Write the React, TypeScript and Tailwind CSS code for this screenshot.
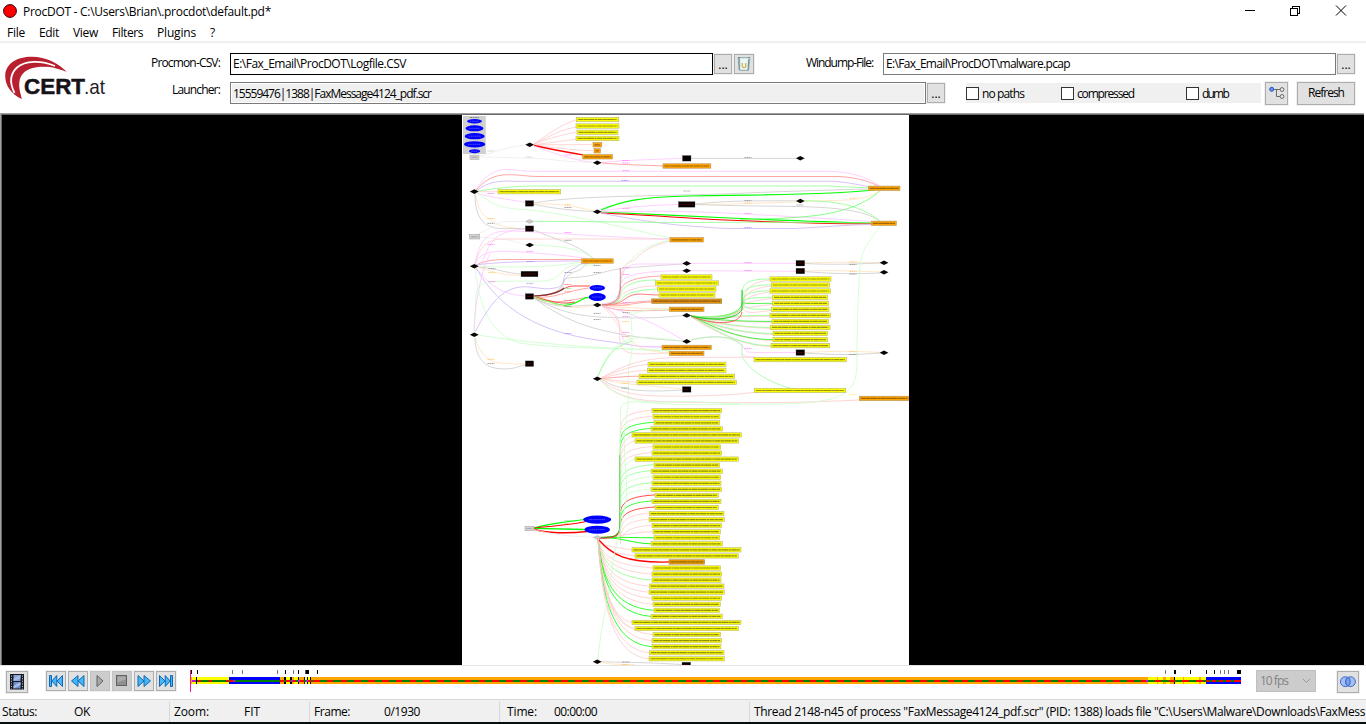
import { useLayoutEffect, useRef, useState } from "react";
import type { ReactNode } from "react";

/** Text whose letter spacing is adjusted so that it fills a given width. */
function Fit({ w, children, className = "" }: { w: number; children: string; className?: string }) {
  const ref = useRef<HTMLSpanElement>(null);
  const [ls, setLs] = useState(0);
  useLayoutEffect(() => {
    if (!ref.current) return;
    const natural = ref.current.getBoundingClientRect().width;
    setLs((w - natural) / children.length);
  }, [w, children]);
  return (
    <span ref={ref} className={`inline-block whitespace-pre ${className}`} style={{ letterSpacing: `${ls}px` }}>
      {children}
    </span>
  );
}

function Btn({ children, className = "" }: { children?: ReactNode; className?: string }) {
  return (
    <button className={`flex shrink-0 items-center justify-center border outline outline-1 outline-[#f0f0f0] ${className}`}>
      {children}
    </button>
  );
}

/* ---------- process graph ---------- */

type Box = [number, number, number];

const yellow: Box[] = [
  [576.3, 618.7, 119.5], [576, 619, 126], [577, 618, 132.3], [576, 619, 138.4],
  [498, 560.7, 191.7],
  [661, 712, 277], [655.3, 718.7, 283], [657.7, 716, 289], [659, 715, 295],
  [648, 726, 364.3], [647.3, 726, 370.3], [639, 734.7, 376.3], [637, 736.3, 382.3],
  [754, 846.3, 359.6], [754.3, 845.8, 390.5],
];
const orange: Box[] = [
  [593, 601.8, 144.8], [594, 600.3, 150.8], [582.7, 612.3, 156.8], [663, 710.8, 166],
  [868.3, 900, 188.3], [871.3, 896.3, 223.3], [670, 703.3, 239.8], [581.7, 613.2, 261],
  [669.3, 704, 309.3], [662, 711.3, 347.4], [669.3, 704, 353.4], [859.3, 909, 398.4],
];
const darkOrange: Box[] = [[651.7, 721.7, 301.1]];

const fanRight: Box[] = [
  [770, 831, 279], [771.3, 829.6, 285], [770, 830.6, 291], [772.5, 827.7, 297.3], [772.6, 828.6, 303.3],
  [771.5, 829, 309.3], [770, 830.6, 315.4], [772, 828.6, 321.4], [770.4, 830, 327.4], [773, 827.6, 333.4],
  [773, 827.6, 339.6], [771, 829.7, 345.6],
];

type Row = [number, number, string];
const G = "#00ff00", g = "#8dff8d", gl = "#c9ffc9", R = "#ff2020", r = "#ff9090", p = "#ffcaca";
const rows: Row[] = [
  [411, 620, p], [414, 615, p], [417, 614, G], [408, 622, G], [351, 679, p], [360, 671, p],
  [414, 617, p], [411, 620, p], [360, 670, gl], [417, 614, g], [408, 622, g], [414, 617, gl],
  [411, 618, g], [408, 620, gl], [420, 610, R], [411, 618, G], [420, 610, R], [403, 627, p],
  [402, 628, p], [411, 620, p], [414, 616, p], [417, 614, G], [408, 622, G], [351, 678, p],
  [360, 670, p], [462, 569, "#ff0000"], [414, 617, p], [411, 620, p], [411, 618, g], [403, 627, p],
  [402, 628, p], [411, 620, p], [414, 616, p], [417, 614, G], [408, 622, G], [351, 678, p],
  [360, 670, p], [414, 617, p], [411, 620, p], [411, 618, G], [403, 627, p], [402, 628, p],
];
const rowX = (v: number) => 515 + v / 3;
const rowY = (i: number) => 410.7 + i * 6.05;

const diamonds: [number, number][] = [
  [529.7, 144.7], [597.3, 162.7], [474.3, 191.6], [597.3, 211.8], [529.7, 245], [800.3, 158.3], [800.3, 201],
  [474.3, 266.3], [474.3, 334.7], [597.3, 305], [597.3, 378.7], [686.7, 263.4], [686.7, 270.7],
  [686.7, 315.4], [686.7, 341.4], [884, 262.7], [884, 272.3], [884, 352.7], [597.3, 661.8],
];
const blacks: Box[] = [
  [525.3, 533.7, 203.4], [525.3, 533.7, 228.7], [682.4, 691, 158.3], [678.4, 695, 204.4], [521, 538, 274],
  [525.3, 533.7, 296.4], [525.3, 533.7, 363.7], [682.4, 691, 389.4], [796, 804.7, 263.2], [796, 804.7, 271],
  [796, 804.7, 352.6], [682, 690.7, 665],
];
const greys: Box[] = [[470, 479, 157.3], [469.5, 479.7, 236.8], [525, 534, 528.5]];
const ellipses: [number, number, number, number][] = [
  [474.5, 121.3, 7.5, 2.2], [474.5, 128.3, 9, 3], [474.7, 136.2, 10, 3.1], [474.6, 144.3, 10.7, 3.1], [474.6, 151.2, 5.6, 2],
  [597.3, 287.9, 7.7, 3], [597.3, 297, 8.5, 4], [597.2, 519.6, 14, 4.1], [597.2, 529.7, 12.7, 4],
];

type Edge = [string, string, number?];
const pink = "#ffc4ff", purple = "#cdb4f5", grey = "#cccccc", cream = "#ffe2b8", faint = "#ececec";
const edges: Edge[] = [
  ["M534 144C550 133 562 124 577 119.5", p], ["M534 144C550 136 562 129 577 127", p], ["M534 144C550 138 565 134 577 132", p],
  ["M534 144.5C550 143 562 141 577 139", p], ["M534 144.7H592", p], ["M534 145C550 147 570 150 593 150.8", p],
  ["M534 145.5C550 149 565 152 583 154.8", "#ff0000", 1.3], ["M534 146C550 152 572 160 593 162.5", pink],
  ["M480 156C497 152 505 147 525 145", faint], ["M480 157C520 158 540 158 555 160S580 162 593 162.5", faint],
  ["M602 162.5C625 160 645 160 682 158.3", pink], ["M602 163C625 165 645 165 663 166", r], ["M691 158.4H796", grey],
  ["M476 190C485 174 497 169 508 169.5S520 171.3 540 171.3H826C850 171.3 867 177 880 186", pink],
  ["M476 190C485 180 494 174.7 508 174.7S525 176.5 540 176.5H840C860 178 870 182 878 186", r],
  ["M476 191C488 182 498 180.3 515 181.3H835C850 183 862 185 870 187", purple],
  ["M478 191C500 188 510 186.5 530 186H830C845 187 855 187 869 188", g],
  ["M478 191.7H498", p], ["M477 193C490 198 510 199 525 202.5", pink],
  ["M477 193C495 205 495 208 530 210C570 214 625 228 670 238", gl],
  ["M475 194C479 208 480 214 489 219S500 228 525 228.7", cream], ["M475 194C475 212 480 222 489 226S505 228 525 228.7", grey],
  ["M475 235C495 228 495 222 507 221.5H525", faint], ["M480 237C495 239 505 237 525 245", faint],
  ["M534 203C575 195 680 196 735 193.5S835 190 869 189", grey], ["M534 204C555 203 575 206 594 211", cream], ["M534 204.3C550 208 575 211 594 211.5", grey],
  ["M601 210C620 202 640 196.5 690 196S840 194 874 190", G, 1.2],
  ["M601 212C650 214 680 216 730 218S820 222 871 223", G, 1.1],
  ["M601 213C650 215 680 218 725 220S820 224 871 223.7", "#ff0000", 1.1],
  ["M601 213C620 217 660 224 690 226S715 228.5 740 228.5H795C825 227 845 225 871 224.5", purple],
  ["M601 211C620 208 650 205 678 204.5", pink], ["M601 212C640 211 685 211 725 213S835 219 871 221.5", pink],
  ["M534 221.4C570 221 640 222.6 690 222.5S740 222 795 222.5L871 223", g],
  ["M740 219.5C800 218 850 218 881 190", "#6f6"], ["M695 204C735 200 760 201 796 200.8", grey], ["M695 204.3C735 205 780 202 820 201S865 199 880 191", cream],
  ["M695 204.5C740 206 765 206 795 206.5S865 209 879 221", grey], ["M804 200.7C850 201 865 210 880 221", g],
  ["M534 230C555 240 575 242 594 259", grey], ["M534 245C560 246 580 248 594 259", gl],
  ["M475 264C480 236 490 230 515 231S620 238 670 239", pink], ["M475 264C480 246 487 239 505 239H670", p],
  ["M475 264C480 252 492 250 520 252S575 256 587 259", pink], ["M476 265C488 259 500 259.5 520 259.5H582", r],
  ["M476 265C488 263 520 261 582 261", purple], ["M478 266C500 267 540 269 582 262", gl],
  ["M482 264C490 237 500 231 525 229", pink], ["M478 267C495 268 505 273 521 274", grey], ["M478 267C495 273 505 275 521 275.5", cream],
  ["M476 268C490 285 500 294 525 296", pink], ["M476 268C500 310 540 332 597 340S630 346 662 347", purple],
  ["M475 268C480 315 495 336 520 343C565 350 630 347 670 351", gl],
  ["M474 331C478 285 470 285 497 281.5C545 280 550 285 562 272S590 269 597 263", gl],
  ["M475 332C490 304 500 292 515 288S540 291 555 288S558 276 571 270S575 264 587 263", purple],
  ["M474 331C475 300 482 268 490 254", pink], ["M478 335C520 342 590 348 670 351", gl],
  ["M475 338C480 353 488 362 500 363S515 364 525 364", cream], ["M475 338C475 354 482 367 498 368.5S515 367 525 365", grey],
  ["M534 296C556 294 562 290 563 285S567 274 577 271S581 262 597 262", grey],
  ["M534 296C555 296 561 289 563 282S575 280 597 274S620 268 683 264", grey], ["M534 296C560 296 562 286 574 286H590", R],
  ["M534 296C553 295 560 292 564 288", "#883333", 1.2], ["M534 297C555 299 565 291 590 287.8", r],
  ["M534 297C550 305 560 302 589 297", r], ["M534 297C553 302 562 309 575 303S583 298 589 297.5", G, 1.3],
  ["M534 297C553 301 560 305 575 302", R], ["M534 298C555 309 570 306 593 305", grey], ["M534 297C555 304 572 311 593 305.5", cream],
  ["M534 298C565 315 585 317 620 317.7S665 317 683 315.6", grey], ["M534 298C570 325 600 330 620 334S665 340 683 341", grey],
  ["M602 304C618 303 619 295 620 287S620 265 630 262S638 249 670 241", p], ["M602 304C622 302 619 292 621 283S625 250 670 240", gl],
  ["M602 304C618 303 619 295 620 287S620 264 640 264H683", pink], ["M602 305C619 303 619 296 620 287S628 271 683 270.7", pink],
  ["M602 305C619 304 619 299 620 292S628 277 661 276", r], ["M602 305C619 304 619 299 621 293S632 280 656 280", g],
  ["M602 305C619 304 619 300 621 296S635 286 658 286", p], ["M602 305C619 305 620 300 625 296S640 290 658 289", g],
  ["M602 305C619 305 620 302 628 297S645 295 659 295", "#ff5555"], ["M602 305C620 305 625 302 652 301", r],
  ["M602 305C620 308 635 302 652 302", r], ["M602 306C620 308 640 308 669 309", cream], ["M602 306C620 312 640 311 669 310", r],
  ["M602 306C630 313 650 320 683 340", pink], ["M602 306C625 317 618 325 620 341S635 354 669 353", p],
  ["M602 306C616 311 620 326 622 336S635 347 662 347", pink], ["M602 306C616 317 617 330 627 336S630 350 669 353", cream],
  ["M602 305C617 304 619.5 298 620.3 288V268", "#d08080", 0.9],
  ["M631 310C631 330 634 345 630 362S631 390 626 420S629 480 626 500S615 545 612 570S600 630 598 660", gl],
  ["M632 315C640 310 650 309 669 310", gl], ["M598 376C606 355 615 345 627 340S665 339 683 341", gl],
  ["M598 376C608 354 614 347 632 341", g], ["M690 263.4H796", pink], ["M690 270.7L796 271.3", pink],
  ["M804.7 263C835 262 855 262 880 262.7", cream], ["M804.7 263.5C835 265 855 264 880 263", grey],
  ["M804.7 271C835 270 855 271 880 272", cream], ["M804.7 271.6C835 274 855 274 880 273", grey],
  ["M804.7 352.5C835 351 855 351 880 352.5", cream], ["M804.7 353C835 355 855 355 880 353", grey],
  ["M691 340C715 334 735 337 742 345S742 352 760 352.6H796", pink], ["M691 340C715 334 735 337 742 346V356C750 372 770 383 796 390", g, 0.7],
  ["M742 354C745 357 750 357 755 357", pink], ["M601 378C625 365 640 357 690 357.3H754", p],
  ["M601 378C618 371 630 366 648 364.3", p], ["M601 378C620 374 630 371 647 370.3", p], ["M601 378.6C620 377 630 376 639 376.3", r],
  ["M601 379C615 380 625 382 637 382.3", p], ["M601 379C620 384 640 385 683 389", cream], ["M601 379C620 392 650 392 683 390", grey],
  ["M600 380C622 395 640 397 690 396S735 394 769 391", p], ["M600 380C620 402 650 402 700 402.5S800 403 859 400", p],
  ["M600 380C625 410 680 404 740 404.5", gl],
  ["M881 226C863 247 860 255 859 280S857 330 857 360S850 403 780 404S700 400 670 402C640 404 621 397 620.5 410V535", gl],
  ["M534 528C550 523 575 521 584 519.5", G, 1.2], ["M534 528C555 526 575 524 586 521.5", "#ff0000", 1.1],
  ["M534 528.3C555 528.8 570 529 585 529.5", G, 1.3], ["M534 529C545 533.5 570 533.5 587 531.5", "#ff0000", 1.4],
  ["M534 529.5C550 534 570 537 594 537", faint], ["M602 661.6C620 662.5 640 662 682 664.5", grey], ["M601 662C610 665 622 664 635 664.5", cream],
];

const labels: [number, number, string][] = [
  [491, 151, "#bbb"], [529, 157, "#bbb"], [568, 155, "#f6f"], [626, 160.5, "#f6f"], [626, 170.6, "#f6f"], [626, 163, "#f6f"], [625, 180.4, "#86e"],
  [491, 193.5, "#f6f"], [568, 204.4, "#fb6"], [568, 207.5, "#777"], [687, 191, "#888"], [626, 208.5, "#f6f"], [491, 218.5, "#fb4"],
  [491, 223.3, "#777"], [568, 232.5, "#f6f"], [568, 240.4, "#777"], [491, 244.5, "#f6f"], [530, 251.4, "#f6f"], [530, 261.5, "#97e"],
  [748, 157.5, "#777"], [748, 200.6, "#777"], [748, 203, "#fb6"], [748, 213.4, "#f6f"], [748, 227.5, "#97e"], [800, 205, "#888"], [853, 198.3, "#fb6"],
  [492, 268.6, "#777"], [492, 272.6, "#fb4"], [492, 281.5, "#f6f"], [530, 283.4, "#97e"], [597, 265.5, "#777"], [597, 272.5, "#777"],
  [568, 272.5, "#777"], [568, 284.5, "#f55"], [568, 288.5, "#6d6"], [568, 291.6, "#f88"], [568, 300.5, "#f55"], [568, 303.5, "#5d5"], [568, 306.6, "#777"],
  [626, 267.6, "#f6f"], [626, 274.5, "#f6f"], [626, 302.4, "#f6f"], [626, 305.6, "#fb6"], [626, 312.6, "#777"], [597, 313.4, "#777"],
  [597, 319.5, "#777"], [626, 316.5, "#f6f"], [626, 321.6, "#fb4"], [626, 332.5, "#f6f"], [626, 336.6, "#b97"], [568, 333.5, "#97e"],
  [491, 359.4, "#fb4"], [491, 363.5, "#777"], [625, 383.3, "#fb4"], [625, 388, "#777"], [748, 262.5, "#f6f"], [748, 270.5, "#f6f"],
  [748, 348.6, "#f6f"], [853, 262, "#fb6"], [853, 264.5, "#777"], [853, 271.4, "#fb6"], [853, 274, "#777"], [853, 351.7, "#fb6"],
  [853, 354.5, "#777"], [853, 394.6, "#fe4"], [568, 520.5, "#7d7"], [568, 523.5, "#fa8"], [568, 528.4, "#7d7"], [626, 662, "#777"], [625, 664.5, "#fb4"],
];

function Label({ b, fill, edge, ink }: { b: Box; fill: string; edge: string; ink: string }) {
  const [x1, x2, y] = b;
  return (
    <g>
      <rect x={x1} y={y - 2.2} width={x2 - x1} height={4.4} fill={fill} stroke={edge} strokeWidth={0.6} />
      <line x1={x1 + 1.5} x2={x2 - 1.5} y1={y} y2={y} stroke={ink} strokeWidth={1.2} strokeDasharray="5.3 .4 3.4 .3 7.1 .5 2.2 .4" opacity={0.7} />
    </g>
  );
}

function Graph() {
  return (
    <svg width="447" height="550" viewBox="462 115 447 550" className="block bg-white">
      <g fill="none">
        {rows.map(([x, , c], i) => {
          const y = rowY(i), bx = rowX(x);
          if (i === 25) return <path key={i} d={`M598 539C612 555 625 563 ${bx} ${y}`} stroke={c} strokeWidth={1.2} />;
          if (i < 20)
            return <path key={i} d={`M599 537.5C614 537.5 620 537 620.4 530V${y + 18}C621 ${y + 5} 632 ${y + 1} ${bx} ${y - 0.5}`} stroke={c} strokeWidth={0.8} />;
          if (i < 23) return <path key={i} d={`M599 537.5C620 537 635 ${y} ${bx} ${y}`} stroke={c} strokeWidth={0.9} />;
          return (
            <path key={i} d={`M598 539C602 ${540 + (y - 538) * 0.5} 611 ${y - 3} ${bx} ${y}`} stroke={c} strokeWidth={0.8} />
          );
        })}
        <path d="M620.2 455V525C620 536 615 537.5 599 537.8" stroke="#12b512" strokeWidth={1.2} />
        <path d="M598 538C610 539 619 537 620 530" stroke="#ff3030" strokeWidth={1} />
        {edges.map(([d, c, w], i) => (
          <path key={i} d={d} stroke={c} strokeWidth={w ?? 0.8} />
        ))}
        {fanRight.map(([x, , y], i) => {
          const d = i < 6
            ? `M691 316C715 ${318 + i * 0.4} 742 316 742.3 302V${y + 12 > 302 ? 302 : y + 12}C743 ${y + 1} 757 ${y} ${x} ${y}`
            : `M691 316C710 ${318 + (i - 6) * 1.6} 735 ${y} ${x} ${y}`;
          const soft = i < 6
            ? `M691 316C720 320 743 314 742.6 306C744 ${y + 6} 755 ${y + 3} ${x} ${y + 1}`
            : `M691 317C712 ${320 + (i - 6) * 2} 740 ${y} ${x} ${y + 1}`;
          return (
            <g key={i} strokeWidth={0.8}>
              <path d={soft} stroke={p} />
              <path d={d} stroke={i === 4 || i === 10 || i === 7 ? "#20ee20" : g} />
            </g>
          );
        })}
        <path d="M691 316C712 325 740 326 742 312" stroke="#ff5050" strokeWidth={0.9} />
        <path d="M691 316C712 321 735 320 742 310V290" stroke="#20c520" strokeWidth={1} />
      </g>
      {labels.map(([x, y, c], i) => (
        <line key={i} x1={x - 3.5} x2={x + 3.5} y1={y} y2={y} stroke={c} strokeWidth={1} strokeDasharray="2 .5 1.2 .3" opacity={0.65} />
      ))}
      <rect x="463" y="116" width="22.8" height="38" fill="#d0d0d0" />
      <line x1="470" x2="479" y1="117.5" y2="117.5" stroke="#777" strokeWidth={0.8} strokeDasharray="2 .5" />
      {[...yellow, ...fanRight].map((b, i) => <Label key={i} b={b} fill="#ffff00" edge="#b4b478" ink="#68681c" />)}
      {rows.map(([x1, x2], i) => (
        <Label key={i} b={[rowX(x1), rowX(x2), rowY(i)]} fill={i === 25 ? "#ed9600" : "#f8f800"} edge={i === 25 ? "#ae8448" : "#bcbc88"} ink="#62621c" />
      ))}
      {orange.map((b, i) => <Label key={i} b={b} fill="#ffa500" edge="#b79259" ink="#764813" />)}
      {darkOrange.map((b, i) => <Label key={i} b={b} fill="#e09010" edge="#a08040" ink="#704010" />)}
      {greys.map((b, i) => <Label key={i} b={b} fill="#d3d3d3" edge="#aaa" ink="#999" />)}
      {blacks.map(([x1, x2, y], i) => (
        <g key={i}>
          <rect x={x1} y={y - 2.8} width={x2 - x1} height={5.6} fill="#050000" stroke="#666" strokeWidth={0.3} />
          <line x1={x1 + 2} x2={x2 - 2} y1={y} y2={y} stroke="#a00000" strokeWidth={0.9} strokeDasharray="1.6 .6" opacity={i === 2 ? 0 : 0.75} />
        </g>
      ))}
      {diamonds.map(([x, y], i) => (
        <path key={i} d={`M${x - 4.4} ${y}L${x} ${y - 2.3}L${x + 4.4} ${y}L${x} ${y + 2.3}Z`} fill="#0a0505" />
      ))}
      {[[529.7, 221.4], [597.3, 537.5]].map(([x, y], i) => (
        <path key={i} d={`M${x - 4} ${y}L${x} ${y - 2}L${x + 4} ${y}L${x} ${y + 2}Z`} fill="#ccc" stroke="#999" strokeWidth={0.4} />
      ))}
      {ellipses.map(([x, y, rx, ry], i) => (
        <g key={i}>
          <ellipse cx={x} cy={y} rx={rx} ry={ry} fill="#0000ff" />
          <line x1={x - rx * 0.6} x2={x + rx * 0.6} y1={y} y2={y} stroke="#8080ff" strokeWidth={0.6} strokeDasharray="1.5 .6" />
        </g>
      ))}
    </svg>
  );
}

/* ---------- timeline ---------- */

const spans: [number, number, string][] = [
  [190, 192, "#ffa500"], [192, 229, "#ffff00"], [229, 280, "#0000ff"], [280, 284, "#ffa500"], [284, 286, "#000"], [286, 290, "#ffff00"],
  [290, 292, "#000"], [292, 294, "#ffa500"], [294, 298, "#ffff00"], [298, 299, "#000"], [299, 304, "#ffa500"], [304, 305, "#0000ff"],
  [305, 307, "#ffff00"], [307, 308, "#000"], [308, 310, "#ffff00"], [310, 311, "#000"], [311, 1148, "#ffa500"], [1148, 1157, "#ffff00"],
  [1157, 1158, "#ffa500"], [1158, 1163, "#ffff00"], [1163, 1166, "#ffa500"], [1166, 1170, "#ffff00"], [1170, 1174, "#ffa500"],
  [1174, 1175, "#000"], [1175, 1183, "#ffff00"], [1183, 1184, "#ffa500"], [1184, 1199, "#ffff00"], [1199, 1201, "#ffa500"],
  [1201, 1206, "#ffff00"], [1206, 1241, "#0000ff"],
];
const reds: [number, number][] = [
  [198, 201], [209, 212], [226, 229], [230, 235], [280, 284], [286, 290], [293, 296], [300, 304], [308, 311], [1206, 1209],
  [1212, 1216], [1219, 1223], [1226, 1231], [1234, 1241],
];
const ticks: [number, number, string][] = [
  [191, 1, "#000"], [197, 1, "#000"], [232, 1, "#777"], [242, 1, "#777"], [277, 1, "#777"], [285, 1, "#000"], [293, 1, "#777"], [298, 1, "#000"],
  [305, 1, "#555"], [306, 3, "#000"], [317, 1, "#000"], [1165, 1, "#777"], [1174, 2, "#000"], [1190, 1, "#000"], [1206, 1, "#000"], [1214, 1, "#000"],
  [1220, 1, "#777"], [1224, 1, "#777"], [1228, 1, "#777"], [1237, 4, "#000"],
];
const middleReds = Array.from({ length: 66 }, (_, i) => 313 + i * 13.8);

function Timeline() {
  return (
    <svg width="1052" height="24" viewBox="190 669 1052 24" className="block" shapeRendering="crispEdges">
      {spans.map(([a, b, c]) => <rect key={a} x={a} y="677" width={b - a} height="7" fill={c} />)}
      <rect x="192" y="680" width="1047" height="2" fill="#008000" />
      {middleReds.map((x) => x < 1204 && <rect key={x} x={x} y="680" width="6.6" height="2" fill="#f00" />)}
      {reds.map(([a, b]) => <rect key={a} x={a} y="680" width={b - a} height="2" fill="#f00" />)}
      {[233, 291, 298, 306, 1146].map((x) => <rect key={x} x={x} y="680" width="2" height="2" fill="#b020d0" />)}
      <rect x="192" y="680" width="4" height="2" fill="#b020d0" />
      <rect x="196" y="677" width="1" height="7" fill="#000" />
      {ticks.map(([x, w, c]) => <rect key={x} x={x} y="670" width={w} height="4" fill={c} />)}
      <rect x="190" y="670" width="1" height="22" fill="#ff1493" />
    </svg>
  );
}

/* ---------- icons ---------- */

function CertLogo() {
  return (
    <svg width="104" height="46" viewBox="0 0 104 46" className="block">
      <path d="M16.7 44C5 38-.5 29 .3 19C1.5 8 13 1.5 27 1.7C41 2 53 8 61.8 16.8C48 12.5 34 11.5 26 15C18 19 13 28 16.7 44Z" fill="#b9202f" />
      <path d="M9.5 38C4.5 28 5 19 12 12.5C20 5.5 36 5 50 11" fill="none" stroke="#fff" strokeWidth="1.8" />
      <path d="M61.8 16.8C46 10.5 29 8.5 19.5 14.5C12 20 11.5 29 15 38L17.5 45C14.5 31 17 23 24.5 18C33 13.5 46 14 61.8 16.8Z" fill="#fff" />
      <path d="M14.5 40C8.5 30 9 21 16 15C22 10 34 9.5 45 12C34 11 25 12.5 19.5 17C13 22.5 13 31 16.7 44Z" fill="#b9202f" />
      <text x="19" y="39" fontFamily="Liberation Sans, Arial, sans-serif" fontSize="22.5" fontWeight="700" fill="#161318" stroke="#161318" strokeWidth=".5" textLength="61" lengthAdjust="spacingAndGlyphs">CERT</text>
      <text x="79" y="39" fontFamily="Liberation Sans, Arial, sans-serif" fontSize="21" fill="#242126" textLength="21" lengthAdjust="spacingAndGlyphs">.at</text>
    </svg>
  );
}

const blueStyle = { fill: "#45b5f5", stroke: "#1268b4", strokeWidth: 1, strokeLinejoin: "round" as const };

function MediaIcon({ kind }: { kind: string }) {
  return (
    <svg width="16" height="16" viewBox="0 0 16 16" className="block shrink-0">
      {kind === "first" && <g {...blueStyle}><path d="M1.5 2.5h2v11h-2zM8.8 2.5v11L3.8 8zM14.5 2.5v11L9 8z" /></g>}
      {kind === "back" && <g {...blueStyle}><path d="M8 2.5v11L1.5 8zM14 2.5v11L8 8z" /></g>}
      {kind === "play" && <path d="M5 2.5V13.5L11 8Z" fill="#a8a8a8" stroke="#606060" />}
      {kind === "stop" && <g><rect x="2.5" y="2.5" width="10" height="10" fill="#909090" stroke="#606060" /><path d="M3.5 3.5h8v3l-8 3z" fill="#aaa" /></g>}
      {kind === "next" && <g {...blueStyle}><path d="M2 2.5v11L8 8zM8 2.5v11L14.5 8z" /></g>}
      {kind === "last" && <g {...blueStyle}><path d="M1.5 2.5v11L7 8zM7.2 2.5v11L12.2 8zM12.5 2.5h2v11h-2z" /></g>}
    </svg>
  );
}

function FilmIcon() {
  return (
    <svg width="14" height="16" viewBox="0 0 14 16" className="block shrink-0">
      <rect width="14" height="15.5" fill="#17191c" />
      <path d="M1.5 1.5V15M12.5 1.5V15" stroke="#b9c0c6" strokeWidth="1" strokeDasharray="1.2 1.4" />
      <rect x="3.5" y="1" width="7" height="6" fill="#8aa5dc" />
      <rect x="3.5" y="8" width="7" height="6.5" fill="#6f8fd0" />
      <path d="M3.5 5L10.5 1v3l-7 3zM3.5 12l7-4v3l-7 3.5z" fill="#a8bfea" />
    </svg>
  );
}

function BinIcon() {
  return (
    <svg width="16" height="16" viewBox="0 0 16 16" className="block shrink-0">
      <path d="M2 1.5h12l-1.5 13h-9z" fill="#d8e6e8" stroke="#9db0b3" />
      <path d="M4.5 3h7l-.6 10H5z" fill="#edf6f6" />
      <path d="M2 1.5h2.2M3.2 2v12M14 1.5h-2M12.9 3L12 14.3" fill="none" stroke="#6b8b8e" strokeWidth="1" />
      <path d="M6.3 7v3.2c0 2 3.4 2 3.4 0V7" fill="none" stroke="#d4b04c" strokeWidth="1.3" />
    </svg>
  );
}

function TreeIcon() {
  return (
    <svg width="16" height="14" viewBox="0 0 16 14" className="block shrink-0" fill="none">
      <path d="M5 3.5h6M7.5 3.5v7H11" stroke="#6b6b6b" />
      <circle cx="2.7" cy="3.3" r="2" fill="#6b91f2" stroke="#2451c4" />
      <circle cx="13" cy="3.5" r="1.9" fill="#e8e8e8" stroke="#666" />
      <circle cx="13" cy="10.5" r="1.9" fill="#e8e8e8" stroke="#666" />
    </svg>
  );
}

function Check({ children, w }: { children: string; w: number }) {
  return (
    <label className="flex items-center gap-[3px]">
      <span className="size-[13px] border border-[#333] bg-white" />
      <Fit w={w} className="pt-px">{children}</Fit>
    </label>
  );
}

const face = "border-[#adadad] bg-[#e1e1e1]";

export default function App() {
  return (
    <div className="flex h-[724px] w-[1366px] flex-col overflow-hidden bg-white text-[12px] leading-[16px] text-black [font-family:'Open_Sans','Noto_Sans',sans-serif]">
      <header className="flex h-[22px] shrink-0 items-center pl-[3px]">
        <svg width="15" height="15" viewBox="0 0 15 15" className="mr-[5px]">
          <circle cx="7" cy="7" r="6.4" fill="#f00" stroke="#300" />
        </svg>
        <Fit w={248} className="pt-[2px]">{"ProcDOT - C:\\Users\\Brian\\.procdot\\default.pd*"}</Fit>
        <svg width="104" height="14" viewBox="0 0 104 14" className="ml-auto mb-[2px] mr-[17px]" fill="none" stroke="#000" shapeRendering="crispEdges">
          <path d="M0 7.5H10M45.5 5.5h7v7h-7zM47.5 5.5v-2h7v7h-2" />
          <path d="M91 2.5l10 10M101 2.5l-10 10" shapeRendering="auto" />
        </svg>
      </header>
      <nav className="flex h-[21px] shrink-0 items-center border-b-2 border-[#f0f0f0] pl-[7px] pt-[2px]">
        <Fit w={18} className="mr-[14px]">File</Fit>
        <Fit w={20} className="mr-[14px]">Edit</Fit>
        <Fit w={25} className="mr-[14px]">View</Fit>
        <Fit w={31} className="mr-[14px]">Filters</Fit>
        <Fit w={39} className="mr-[14px]">Plugins</Fit>
        <span>?</span>
      </nav>

      <section className="flex h-[70px] shrink-0">
        <div className="w-[146px] shrink-0 pl-[5px] pt-[12px]"><CertLogo /></div>
        <div className="w-[1220px] pt-[10px]">
          <div className="flex h-[22px] items-center">
            <div className="flex w-[84px] shrink-0 pb-[3px] pl-[5px]"><Fit w={69}>Procmon-CSV:</Fit></div>
            <div className="flex h-[22px] w-[483px] items-center border border-black pb-px pl-[2px]"><Fit w={173}>{"E:\\Fax_Email\\ProcDOT\\Logfile.CSV"}</Fit></div>
            <Btn className={`${face} ml-px h-[20px] w-[18px] pt-px`}>...</Btn>
            <Btn className={`${face} ml-[2px] h-[20px] w-[20px]`}><BinIcon /></Btn>
            <div className="flex w-[129px] shrink-0 pb-[3px] pl-[52px]"><Fit w={67}>Windump-File:</Fit></div>
            <div className="flex h-[22px] w-[453px] items-center border border-[#7a7a7a] pb-px pl-[2px]"><Fit w={184}>{"E:\\Fax_Email\\ProcDOT\\malware.pcap"}</Fit></div>
            <Btn className={`${face} ml-px h-[20px] w-[18px] pt-px`}>...</Btn>
          </div>
          <div className="mt-[6px] flex h-[24px] items-center">
            <div className="flex w-[84px] shrink-0 pb-[6px] pl-[26px]"><Fit w={48}>Launcher:</Fit></div>
            <div className="flex h-[22px] w-[696px] items-center border border-[#7a7a7a] bg-[#f0f0f0] pl-[2px] pt-px outline outline-1 -outline-offset-2 outline-white"><Fit w={198}>15559476|1388|FaxMessage4124_pdf.scr</Fit></div>
            <Btn className={`${face} ml-px h-[20px] w-[18px] pt-px`}>...</Btn>
            <div className="ml-[21px] grid h-[20px] w-[295px] grid-cols-[95px_125px_75px] items-center bg-[#f0f0f0]">
              <Check w={42}>no paths</Check>
              <Check w={57}>compressed</Check>
              <Check w={26}>dumb</Check>
            </div>
            <Btn className={`${face} ml-[4px] h-[23px] w-[23px]`}><TreeIcon /></Btn>
            <Btn className={`${face} ml-[9px] h-[23px] w-[58px]`}><Fit w={36}>Refresh</Fit></Btn>
          </div>
        </div>
      </section>

      <main className="h-[552px] w-[1364px] shrink-0 border-l border-t border-[#a0a0a0]">
        <div className="flex h-[551px] border-l border-t border-[#696969] bg-black pl-[460px]">
          <Graph />
        </div>
      </main>

      <footer className="flex h-[57px] w-full shrink-0 flex-col border-t border-[#e3e3e3]">
        <div className="flex h-[33px] items-center">
          <Btn className={`${face} mb-[2px] ml-[6px] h-[22px] w-[22px]`}><FilmIcon /></Btn>
          <div className="mb-[4px] ml-[18px] flex gap-[2px]">
            {["first", "back", "play", "stop", "next", "last"].map((k) => (
              <Btn key={k} className={`h-[20px] w-[20px] ${k === "play" || k === "stop" ? "border-[#c3c3c3] bg-[#cccccc]" : face}`}><MediaIcon kind={k} /></Btn>
            ))}
          </div>
          <div className="ml-[14px] pb-[4px]"><Timeline /></div>
          <div className="mb-[4px] ml-[14px] flex h-[22px] w-[60px] items-center justify-between border border-[#bfbfbf] bg-[#cccccc] pl-[3px] pr-[4px] text-[#838383]">
            <Fit w={28}>10 fps</Fit>
            <svg width="9" height="6" viewBox="0 0 9 6" fill="none" stroke="#999"><path d="M.8 .8L4.5 4.5L8.2 .8" /></svg>
          </div>
          <Btn className={`${face} mb-[2px] ml-[21px] h-[22px] w-[22px]`}>
            <svg width="18" height="14" viewBox="0 0 18 14" className="block shrink-0" stroke="#3c66c8" strokeWidth="1">
              <circle cx="6.3" cy="6.7" r="4.9" fill="#a3bef5" /><circle cx="11.5" cy="6.7" r="4.9" fill="#8fb0f2" fillOpacity=".7" />
              <ellipse cx="8.9" cy="6.7" rx="2.2" ry="4" fill="#7d9fec" />
            </svg>
          </Btn>
        </div>
        <div className="flex h-[23px] items-center border-t border-[#d7d7d7] bg-[#f0f0f0] pt-px">
          <div className="flex h-[20px] w-[170px] shrink-0 items-center border-r border-[#d7d7d7] pl-[2px]"><Fit w={35} className="mr-[37px]">Status:</Fit><Fit w={16}>OK</Fit></div>
          <div className="flex h-[20px] w-[140px] shrink-0 items-center border-r border-[#d7d7d7] pl-[4px]"><Fit w={35} className="mr-[35px]">Zoom:</Fit><Fit w={16}>FIT</Fit></div>
          <div className="flex h-[20px] w-[190px] shrink-0 items-center border-r border-[#d7d7d7] pl-[4px]"><Fit w={36} className="mr-[34px]">Frame:</Fit><Fit w={36}>0/1930</Fit></div>
          <div className="flex h-[20px] w-[250px] shrink-0 items-center border-r border-[#d7d7d7] pl-[7px]"><Fit w={30} className="mr-[17px]">Time:</Fit><Fit w={43}>00:00:00</Fit></div>
          <div className="flex h-[20px] min-w-0 flex-1 items-center overflow-hidden pl-[4px]"><Fit w={611}>{'Thread 2148-n45 of process "FaxMessage4124_pdf.scr" (PID: 1388) loads file "C:\\Users\\Malware\\Downloads\\FaxMess'}</Fit></div>
        </div>
      </footer>
      <div className="h-[2px] w-full shrink-0 bg-[#050d0d]" />
    </div>
  );
}
